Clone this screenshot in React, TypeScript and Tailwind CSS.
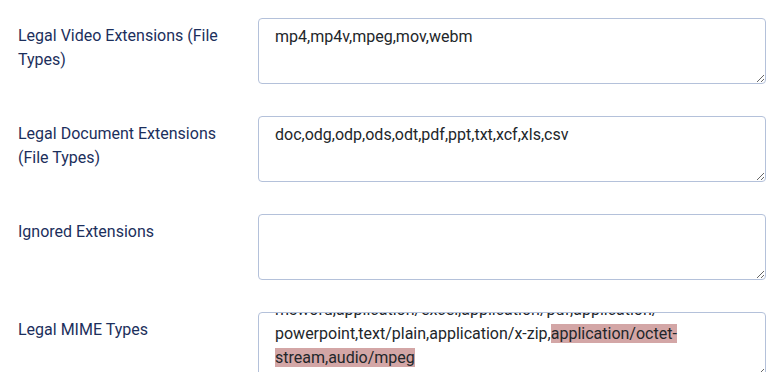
import React from "react"

const fieldBox =
  "block h-[66px] w-full rounded-[4px] border border-[#b4c1da] bg-white px-4 pt-[6px] font-['Roboto',sans-serif] text-[16px] leading-6 text-[#22262a] outline-none"

interface RowProps {
  label: string
  children: React.ReactNode
}

function FieldRow({ label, children }: RowProps) {
  return (
    <div className="flex items-start">
      <label className="w-[240px] shrink-0 pr-[18px] pt-[6px] text-[16px] leading-6 text-[#1c2f5c]">
        {label}
      </label>
      <div className="min-w-0 flex-1">{children}</div>
    </div>
  )
}

export default function App() {
  return (
    <div className="min-h-screen bg-white pl-[18px] pt-[18px] font-['Roboto',sans-serif]">
      <div className="flex flex-col gap-[32px]">
        <FieldRow label="Legal Video Extensions (File Types)">
          <textarea
            className={fieldBox}
            defaultValue="mp4,mp4v,mpeg,mov,webm"
          />
        </FieldRow>

        <FieldRow label="Legal Document Extensions (File Types)">
          <textarea
            className={fieldBox}
            defaultValue="doc,odg,odp,ods,odt,pdf,ppt,txt,xcf,xls,csv"
          />
        </FieldRow>

        <FieldRow label="Ignored Extensions">
          <textarea className={fieldBox} defaultValue="" />
        </FieldRow>

        <FieldRow label="Legal MIME Types">
          {/* scrolled textarea with a selection, drawn as a div */}
          <div className="h-[66px] w-full resize-y overflow-hidden rounded-[4px] border border-[#b4c1da] bg-white px-4 text-[16px] leading-6 text-[#22262a]">
            <div className="-mt-[15px] whitespace-nowrap">
              <div>msword,application/excel,application/pdf,application/</div>
              <div>
                powerpoint,text/plain,application/x-zip,
                <span className="bg-[#d3a6a6]">application/octet-</span>
              </div>
              <div>
                <span className="bg-[#d3a6a6]">stream,audio/mpeg</span>
              </div>
            </div>
          </div>
        </FieldRow>
      </div>
    </div>
  )
}
